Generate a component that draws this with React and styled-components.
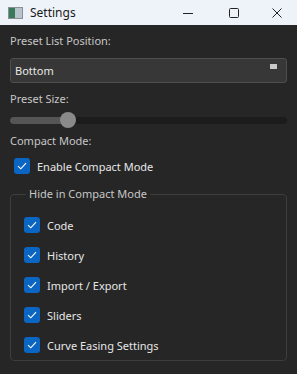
import styled, { createGlobalStyle } from "styled-components"

const Global = createGlobalStyle`
  html, body { margin: 0; padding: 0; }
  body {
    background: #262626;
    font-family: "Noto Sans", "Open Sans", sans-serif;
    font-size: 11px;
  }
`

const Window = styled.div`
  width: 297px;
  height: 374px;
  display: flex;
  flex-direction: column;
  background: #262626;
  overflow: hidden;
`

const TitleBar = styled.div`
  height: 25px;
  background: #eef3f9;
  display: flex;
  align-items: center;
  color: #1a1a1a;
  font-size: 12px;
`

const AppIcon = styled.div`
  margin-left: 8px;
  width: 13px;
  height: 10px;
  border: 1px solid #8a9098;
  background: linear-gradient(90deg, #3a7a5a 0 45%, #b8c4cc 45% 100%);
  margin-right: 7px;
`

const Title = styled.span`
  flex: 1;
`

const Caption = styled.div`
  width: ${p => p.w}px;
  height: 25px;
  display: flex;
  align-items: center;
  justify-content: center;
`

const Body = styled.div`
  padding: 8px 10px 0 10px;
  display: flex;
  flex-direction: column;
`

const Label = styled.div`
  color: #c6c6c6;
  height: 16px;
  line-height: 16px;
  margin-bottom: ${p => p.mb || 0}px;
`

const Combo = styled.div`
  height: 25px;
  box-sizing: border-box;
  border: 1px solid #4e4e4e;
  border-radius: 3px;
  background: #373737;
  display: flex;
  align-items: center;
  padding: 0 9px 0 4px;
  color: #e8e8e8;
  margin-bottom: 8px;
`

const ComboText = styled.span`
  flex: 1;
`

const ComboMark = styled.span`
  width: 7px;
  height: 5px;
  background: #c8c8c8;
  align-self: flex-start;
  margin-top: 5px;
`

const SliderRow = styled.div`
  height: 22px;
  position: relative;
  display: flex;
  align-items: center;
  margin-bottom: 2px;
`

const Track = styled.div`
  flex: 1;
  height: 7px;
  border-radius: 4px;
  background: #1c1c1c;
  overflow: hidden;
`

const Fill = styled.div`
  height: 100%;
  background: #555555;
`

const Thumb = styled.div`
  position: absolute;
  top: 3px;
  width: 16px;
  height: 16px;
  border-radius: 50%;
  background: #8a8a8a;
`

const CheckRow = styled.label`
  display: flex;
  align-items: center;
  height: 16px;
  color: #e6e6e6;
  gap: 7px;
`

const Box = styled.span`
  width: 16px;
  height: 16px;
  border-radius: 3px;
  background: #0a66c2;
  display: flex;
  align-items: center;
  justify-content: center;
`

const EnableWrap = styled.div`
  padding-left: 4px;
  margin-bottom: 13px;
`

const Group = styled.fieldset`
  margin: 0;
  border: 1px solid #3d3d3d;
  border-radius: 4px;
  padding: 16px 0 12px 13px;
  display: flex;
  flex-direction: column;
  gap: 14px;
  height: 174px;
  box-sizing: border-box;
  min-width: 0;
`

const Legend = styled.legend`
  color: #c6c6c6;
  padding: 0 3px;
  margin-left: 2px;
  line-height: 14px;
`

const Check = ({ children }) => (
  <CheckRow>
    <Box>
      <svg width="10" height="8" viewBox="0 0 10 8">
        <path d="M1 4.2 L3.8 6.8 L9 1.2" fill="none" stroke="#fff" strokeWidth="1.1" />
      </svg>
    </Box>
    {children}
  </CheckRow>
)

const items = ["Code", "History", "Import / Export", "Sliders", "Curve Easing Settings"]

export default function App() {
  const value = 21
  return (
    <Window>
      <Global />
      <TitleBar>
        <AppIcon />
        <Title>Settings</Title>
        <Caption w={46}>
          <svg width="10" height="10" viewBox="0 0 10 10"><path d="M0 5.5 H10" stroke="#222" strokeWidth="1" /></svg>
        </Caption>
        <Caption w={46}>
          <svg width="10" height="10" viewBox="0 0 10 10"><rect x="0.5" y="0.5" width="9" height="9" rx="1" fill="none" stroke="#222" strokeWidth="1" /></svg>
        </Caption>
        <Caption w={40}>
          <svg width="10" height="10" viewBox="0 0 10 10"><path d="M0.5 0.5 L9.5 9.5 M9.5 0.5 L0.5 9.5" stroke="#222" strokeWidth="1" /></svg>
        </Caption>
      </TitleBar>
      <Body>
        <Label mb={9}>Preset List Position:</Label>
        <Combo>
          <ComboText>Bottom</ComboText>
          <ComboMark />
        </Combo>
        <Label mb={2}>Preset Size:</Label>
        <SliderRow>
          <Track><Fill style={{ width: `${value}%` }} /></Track>
          <Thumb style={{ left: `calc(${value}% - 8px)` }} />
        </SliderRow>
        <Label mb={9}>Compact Mode:</Label>
        <EnableWrap>
          <Check>Enable Compact Mode</Check>
        </EnableWrap>
        <Group>
          <Legend>Hide in Compact Mode</Legend>
          {items.map(i => <Check key={i}>{i}</Check>)}
        </Group>
      </Body>
    </Window>
  )
}
